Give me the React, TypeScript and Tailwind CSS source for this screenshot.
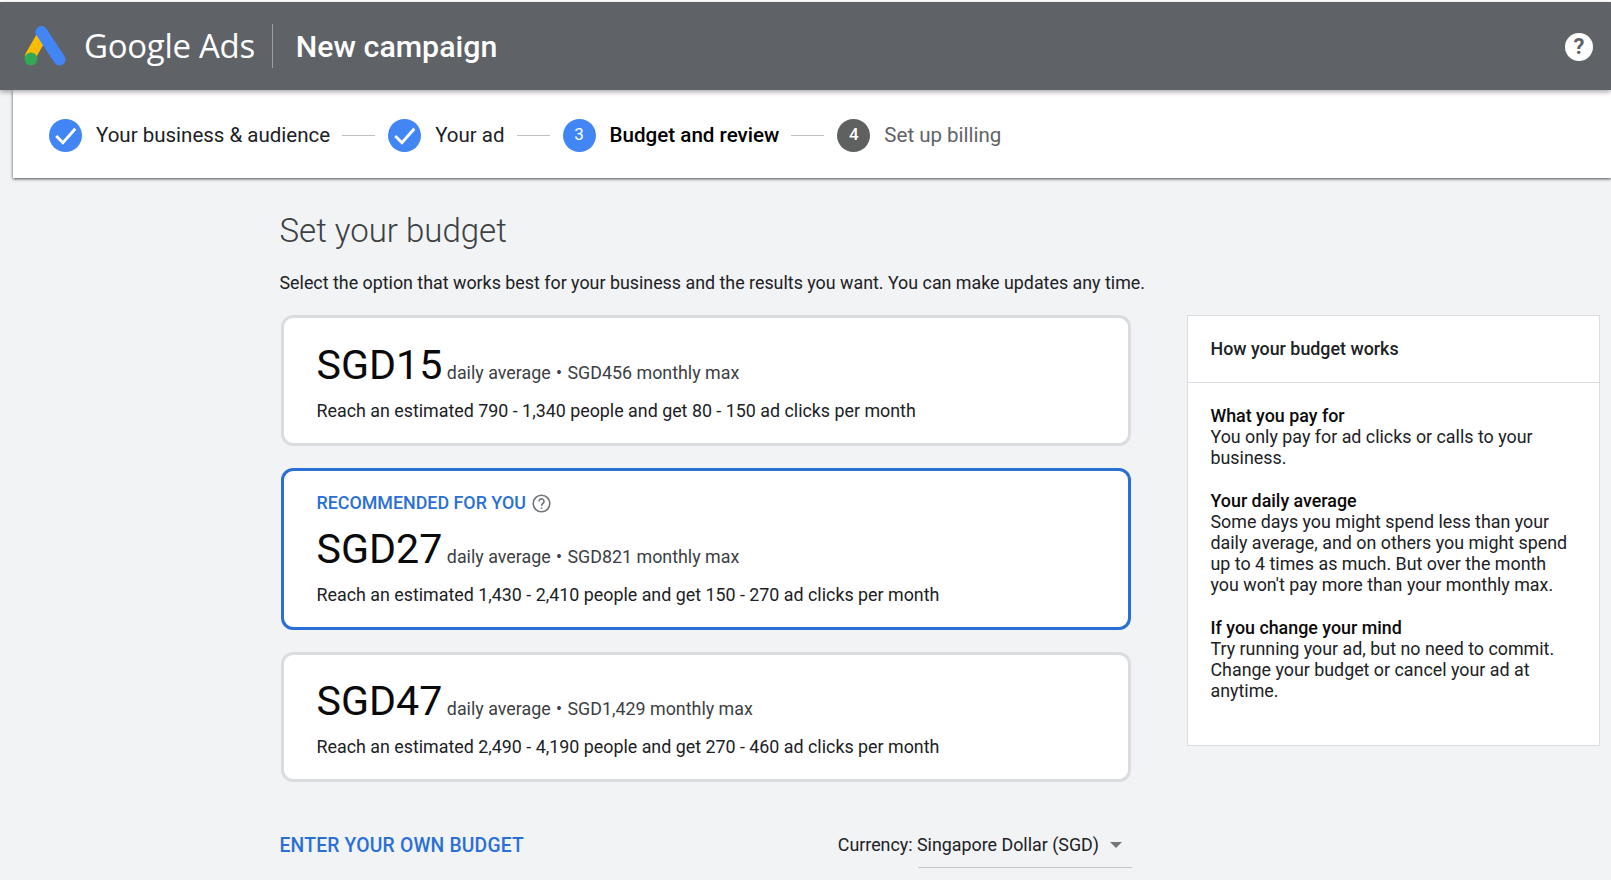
const steps = [
  { label: 'Your business & audience', state: 'done' },
  { label: 'Your ad', state: 'done' },
  { label: 'Budget and review', state: 'current', num: 3 },
  { label: 'Set up billing', state: 'todo', num: 4 },
];

const options = [
  { amount: 'SGD15', monthly: 'SGD456', reach: '790 - 1,340', clicks: '80 - 150', box: 'h-[131px] pt-[22px]' },
  { amount: 'SGD27', monthly: 'SGD821', reach: '1,430 - 2,410', clicks: '150 - 270', recommended: true, box: 'h-[162px] pt-[20px]' },
  { amount: 'SGD47', monthly: 'SGD1,429', reach: '2,490 - 4,190', clicks: '270 - 460', box: 'h-[130px] pt-[21px]' },
];

const help = [
  { title: 'What you pay for', lines: ['You only pay for ad clicks or calls to your', 'business.'] },
  {
    title: 'Your daily average',
    lines: [
      'Some days you might spend less than your',
      'daily average, and on others you might spend',
      'up to 4 times as much. But over the month',
      "you won't pay more than your monthly max.",
    ],
  },
  {
    title: 'If you change your mind',
    lines: ['Try running your ad, but no need to commit.', 'Change your budget or cancel your ad at', 'anytime.'],
  },
];

function AdsLogo() {
  return (
    <svg width="42" height="40" viewBox="0 0 42 40" className="shrink-0">
      <path d="M18 10 L6.5 30" stroke="#fbbc04" strokeWidth="11" strokeLinecap="round" />
      <path d="M17.5 6 L35.5 33.5" stroke="#4285f4" strokeWidth="12" strokeLinecap="round" />
      <circle cx="7" cy="33" r="6.5" fill="#34a853" />
    </svg>
  );
}

function StepIcon({ state, num }: { state: string; num?: number }) {
  if (state === 'done') {
    return (
      <svg width="33" height="33" viewBox="0 0 32 32" className="shrink-0">
        <circle cx="16" cy="16" r="16" fill="#4285f4" />
        <path d="M7 16.5 L13.5 23 L25.5 9.5" fill="none" stroke="white" strokeWidth="2.8" />
      </svg>
    );
  }
  return (
    <div
      className={
        state === 'current'
          ? 'flex h-[33px] w-[33px] shrink-0 items-center justify-center rounded-full bg-[#4285f4] text-[17px] text-white'
          : 'flex h-[33px] w-[33px] shrink-0 items-center justify-center rounded-full bg-[#5f6060] text-[17px] font-medium text-white'
      }
    >
      {num}
    </div>
  );
}

function Card({ option }: { option: (typeof options)[number] }) {
  return (
    <div
      className={
        option.recommended
          ? `flex ${option.box} flex-col rounded-xl border-[3px] border-[#2a6fd6] bg-white pl-[32.5px]`
          : `flex ${option.box} flex-col rounded-xl border-[3px] border-[#dadce0] bg-white pl-[32.5px]`
      }
    >
      {option.recommended && (
        <div className="mb-[9px] flex h-[24px] items-center gap-[6px] text-[17.85px] font-medium text-[#2a6fd6]">
          RECOMMENDED FOR YOU
          <svg width="19" height="19" viewBox="0 0 24 24" fill="none" stroke="#70757a" strokeWidth="2">
            <circle cx="12" cy="12" r="10.5" />
            <path d="M8.8 9.3a3.2 3.2 0 1 1 5 2.7c-1.2.8-1.8 1.4-1.8 2.8" />
            <path d="M12 17v1.8" />
          </svg>
        </div>
      )}
      <div className="flex h-[49px] items-baseline">
        <span className="text-[41.2px] leading-[51px] text-[#0a0a0a]">{option.amount}</span>
        <span className="ml-[4.5px] text-[17.85px] text-[#3c4043]">
          daily average <span className="mx-[1px]">•</span> {option.monthly} monthly max
        </span>
      </div>
      <div className="mt-[9px] text-[17.85px] leading-[26px] text-[#202124]">
        Reach an estimated {option.reach} people and get {option.clicks} ad clicks per month
      </div>
    </div>
  );
}

export default function App() {
  return (
    <div className="h-[880px] w-[1611px] overflow-hidden bg-[#f1f3f4] font-['Roboto',sans-serif]">
      <div className="h-[2px] bg-white" />

      {/* Top bar */}
      <header className="relative z-20 flex h-[88px] items-center bg-[#5f6368] pl-[24px] pr-[18px] shadow-[0_2px_5px_rgba(0,0,0,0.35)]">
        <AdsLogo />
        <span className="ml-[18px] font-['Open_Sans',sans-serif] text-[33px] tracking-[-0.3px] text-white">
          Google Ads
        </span>
        <div className="ml-[17px] h-[44px] w-px bg-[#9aa0a6]" />
        <span className="ml-[23px] mt-[1px] text-[30.3px] font-medium text-white">New campaign</span>
        <div className="ml-auto mt-[1px] flex h-7 w-7 items-center justify-center rounded-full bg-white text-[22px] font-bold text-[#5f6368]">
          ?
        </div>
      </header>

      {/* Stepper */}
      <div className="relative z-10 ml-[13px] flex h-[88px] items-center bg-white pl-[36px] pt-[2px] shadow-[0_1px_3px_rgba(0,0,0,0.7)]">
        {steps.map((step, i) => (
          <div key={step.label} className="flex items-center">
            <StepIcon state={step.state} num={step.num} />
            <span
              className={
                step.state === 'current'
                  ? 'ml-[14px] text-[20.6px] font-medium text-black'
                  : step.state === 'todo'
                    ? 'ml-[14px] text-[20.5px] text-[#5f6368]'
                    : 'ml-[14px] text-[20.5px] text-[#202124]'
              }
            >
              {step.label}
            </span>
            {i < steps.length - 1 && <div className="ml-[12px] mr-[13px] h-px w-[33px] bg-[#bdc1c6]" />}
          </div>
        ))}
      </div>

      {/* Main content */}
      <main className="pl-[279.5px]">
        <h1 className="mt-[32px] text-[33px] font-light leading-[42px] text-[#3c4043]">Set your budget</h1>
        <p className="mt-[18px] text-[17.85px] leading-[26px] text-[#202124]">
          Select the option that works best for your business and the results you want. You can make updates any time.
        </p>

        <div className="mt-[19px] flex items-start">
          <div className="ml-[1.5px] w-[850px]">
            <div className="flex flex-col gap-[22px]">
              {options.map((o) => (
                <Card key={o.amount} option={o} />
              ))}
            </div>

            <div className="-ml-[1.5px] mt-[50px] flex items-start justify-between">
              <span className="text-[19.3px] font-medium leading-[28px] tracking-[0.2px] text-[#2a6fd6]">
                ENTER YOUR OWN BUDGET
              </span>
              <div className="-mr-[1px] -mt-[1px] flex flex-col items-end">
                <div className="flex h-[28px] items-center text-[17.85px] text-[#202124]">
                  Currency: Singapore Dollar (SGD)
                  <div className="ml-[11px] mr-[10px] h-0 w-0 border-x-[6px] border-t-[6px] border-x-transparent border-t-[#757575]" />
                </div>
                <div className="mt-[8px] h-px w-[214px] bg-[#c4c7c9]" />
              </div>
            </div>
          </div>

          {/* Help panel */}
          <aside className="ml-[56px] h-[431px] w-[413px] border border-[#dadce0] bg-white">
            <div className="flex h-[67px] items-center border-b border-[#dadce0] pl-[22.5px] text-[17.85px] font-medium text-[#202124]">
              How your budget works
            </div>
            <div className="flex flex-col gap-[22px] pl-[22.5px] pt-[22px]">
              {help.map((h) => (
                <div key={h.title} className="text-[17.85px] leading-[21px] text-[#202124]">
                  <div className="font-medium text-[#0a0a0a]">{h.title}</div>
                  {h.lines.map((l) => (
                    <div key={l}>{l}</div>
                  ))}
                </div>
              ))}
            </div>
          </aside>
        </div>
      </main>
    </div>
  );
}
